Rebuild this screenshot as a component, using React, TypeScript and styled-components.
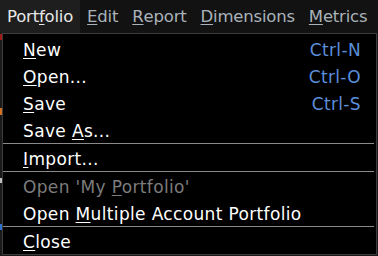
import React from "react";
import styled, { createGlobalStyle } from "styled-components";

const Global = createGlobalStyle`
  html, body { margin: 0; padding: 0; background: #121212; }
  body { width: 378px; height: 256px; overflow: hidden; font-family: "DejaVu Sans", Verdana, sans-serif; }
`;

const Screen = styled.div`
  position: relative;
  width: 378px;
  height: 256px;
  background: #151515;
  display: flex;
  flex-direction: column;
`;

const MenuBar = styled.div`
  display: flex;
  align-items: stretch;
  height: 33px;
  background: #121212;
`;

const BarItem = styled.div<{ $active?: boolean }>`
  display: flex;
  align-items: center;
  padding: 0 7px;
  background: ${(p) => (p.$active ? "#1e1e1e" : "transparent")};
  color: ${(p) => (p.$active ? "#e8e8e8" : "#aab2ba")};
  font-size: 16.5px;
  letter-spacing: -0.2px;
`;

const U = styled.span`
  text-decoration: underline;
  text-underline-offset: 2px;
`;

const Body = styled.div`
  flex: 1;
  display: flex;
  background: #1a1a1a;
`;

const Dropdown = styled.div`
  position: absolute;
  left: 2px;
  top: 33px;
  width: 375px;
  height: 222px;
  background: #000;
  border: 1px solid #3c3c3c;
  display: flex;
  flex-direction: column;
  padding-top: 1px;
  box-sizing: border-box;
`;

const Item = styled.div<{ $disabled?: boolean }>`
  display: flex;
  align-items: center;
  justify-content: space-between;
  box-sizing: border-box;
  height: 27px;
  flex-shrink: 0;
  padding: 3px 15px 0 20px;
  color: ${(p) => (p.$disabled ? "#7c7c7c" : "#ffffff")};
  font-size: 17px;
  letter-spacing: 0.35px;
`;

const Shortcut = styled.span`
  color: #5b8fdc;
`;

const Sep = styled.div`
  height: 1px;
  flex-shrink: 0;
  margin: 0 2px 0 0;
  background: #8a8a8a;
`;

const Mark = styled.div<{ $top: number; $c: string; $h: number }>`
  position: absolute;
  left: 0;
  top: ${(p) => p.$top}px;
  width: 2px;
  height: ${(p) => p.$h}px;
  background: ${(p) => p.$c};
`;

export default function App() {
  return (
    <>
      <Global />
      <Screen>
        <MenuBar>
          <BarItem $active>
            Port<U>f</U>olio
          </BarItem>
          <BarItem>
            <U>E</U>dit
          </BarItem>
          <BarItem>
            <U>R</U>eport
          </BarItem>
          <BarItem>
            <U>D</U>imensions
          </BarItem>
          <BarItem>
            <U>M</U>etrics
          </BarItem>
        </MenuBar>
        <Body />
        <Mark $top={34} $c="#a01818" $h={6} />
        <Mark $top={108} $c="#d07020" $h={7} />
        <Mark $top={178} $c="#c0c0c0" $h={5} />
        <Mark $top={224} $c="#3070d0" $h={6} />
        <Dropdown>
          <Item>
            <span>
              <U>N</U>ew
            </span>
            <Shortcut>Ctrl-N</Shortcut>
          </Item>
          <Item>
            <span>
              <U>O</U>pen...
            </span>
            <Shortcut>Ctrl-O</Shortcut>
          </Item>
          <Item>
            <span>
              <U>S</U>ave
            </span>
            <Shortcut>Ctrl-S</Shortcut>
          </Item>
          <Item>
            <span>
              Save <U>A</U>s...
            </span>
          </Item>
          <Sep />
          <Item>
            <span>
              <U>I</U>mport...
            </span>
          </Item>
          <Sep />
          <Item $disabled>
            <span>
              Open 'My <U>P</U>ortfolio'
            </span>
          </Item>
          <Item>
            <span>
              Open <U>M</U>ultiple Account Portfolio
            </span>
          </Item>
          <Sep />
          <Item>
            <span>
              <U>C</U>lose
            </span>
          </Item>
        </Dropdown>
      </Screen>
    </>
  );
}
